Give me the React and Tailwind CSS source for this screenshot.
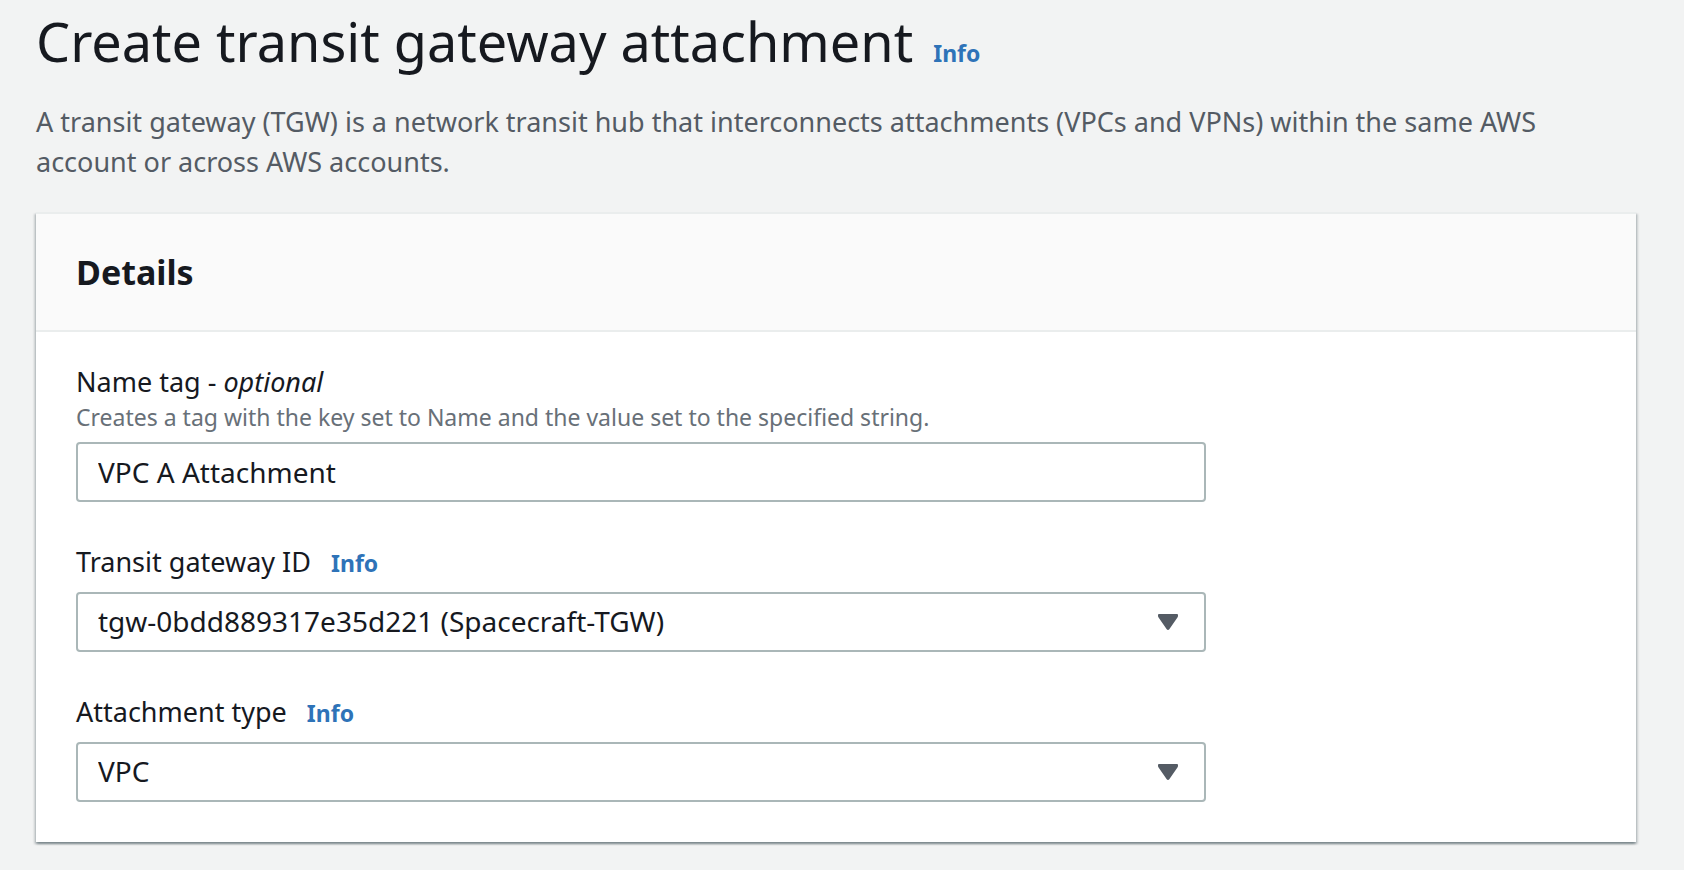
import { useState } from "react";

const controlClass =
  "block h-15 w-full rounded-sm border-2 border-[#aab7b8] bg-white pl-5 text-[28px] leading-10 text-[#16191f] outline-none focus-visible:border-[#2e73b8]";

function InfoLink({ topic }) {
  return (
    <a
      href="#info"
      aria-label={`Info about ${topic}`}
      className="text-[23px] leading-8 font-bold text-[#2e73b8] hover:underline"
    >
      Info
    </a>
  );
}

function Caret() {
  return (
    <svg
      viewBox="0 0 20 16"
      aria-hidden="true"
      className="pointer-events-none absolute top-1/2 right-7 h-4 w-5 -translate-y-1/2"
    >
      <path
        d="M1 0H19Q20 0 20 1V2Q20 2.6 19.6 3.2L11.3 15.2Q10.8 16 10 16Q9.2 16 8.7 15.2L.4 3.2Q0 2.6 0 2V1Q0 0 1 0Z"
        fill="#545b64"
      />
    </svg>
  );
}

function SelectField({ id, label, options }) {
  const [value, setValue] = useState(options[0]);
  return (
    <div>
      <div className="mb-2.5 flex items-baseline gap-5">
        <label htmlFor={id} className="text-[27px] leading-10">
          {label}
        </label>
        <InfoLink topic={label} />
      </div>
      <div className="relative">
        <select
          id={id}
          value={value}
          onChange={(event) => setValue(event.target.value)}
          className={`${controlClass} appearance-none pr-16 pb-0.5`}
        >
          {options.map((option) => (
            <option key={option}>{option}</option>
          ))}
        </select>
        <Caret />
      </div>
    </div>
  );
}

export default function App() {
  const [name, setName] = useState("VPC A Attachment");
  return (
    <main className="min-h-screen bg-[#f2f3f3] pt-2 pr-12 pb-7 pl-9 font-['Noto_Sans','Open_Sans',sans-serif] text-[#16191f]">
      <header>
        <div className="flex items-baseline gap-5">
          <h1 className="text-[54px] leading-[66px]">Create transit gateway attachment</h1>
          <InfoLink topic="transit gateway attachments" />
        </div>
        <p className="mt-7 text-[27px] leading-10 text-[#545b64]">
          A transit gateway (TGW) is a network transit hub that interconnects attachments (VPCs and
          VPNs) within the same AWS account or across AWS accounts.
        </p>
      </header>

      <section
        aria-labelledby="details-title"
        className="mt-[30px] border-t-2 border-[#eaeded] bg-white shadow-[0_2px_2px_0_rgba(0,28,36,0.3),2px_2px_2px_0_rgba(0,28,36,0.15),-2px_2px_2px_0_rgba(0,28,36,0.15)]"
      >
        <div className="border-b-2 border-[#eaeded] bg-[#fafafa] px-10 py-9">
          <h2 id="details-title" className="text-[34px] leading-11 font-bold">
            Details
          </h2>
        </div>

        <form
          className="grid grid-cols-12 gap-x-10 px-10 pt-[30px] pb-10"
          onSubmit={(event) => event.preventDefault()}
        >
          <div className="col-span-9 flex flex-col gap-10">
            <div>
              <label htmlFor="name-tag" className="block text-[27px] leading-10">
                Name tag - <i>optional</i>
              </label>
              <p id="name-tag-hint" className="mb-2.5 text-[23px] leading-[30px] text-[#687078]">
                Creates a tag with the key set to Name and the value set to the specified string.
              </p>
              <input
                id="name-tag"
                type="text"
                aria-describedby="name-tag-hint"
                value={name}
                onChange={(event) => setName(event.target.value)}
                className={`${controlClass} pr-5`}
              />
            </div>
            <SelectField
              id="transit-gateway-id"
              label="Transit gateway ID"
              options={["tgw-0bdd889317e35d221 (Spacecraft-TGW)"]}
            />
            <SelectField
              id="attachment-type"
              label="Attachment type"
              options={["VPC", "VPN", "Peering Connection", "Connect"]}
            />
          </div>
        </form>
      </section>
    </main>
  );
}
